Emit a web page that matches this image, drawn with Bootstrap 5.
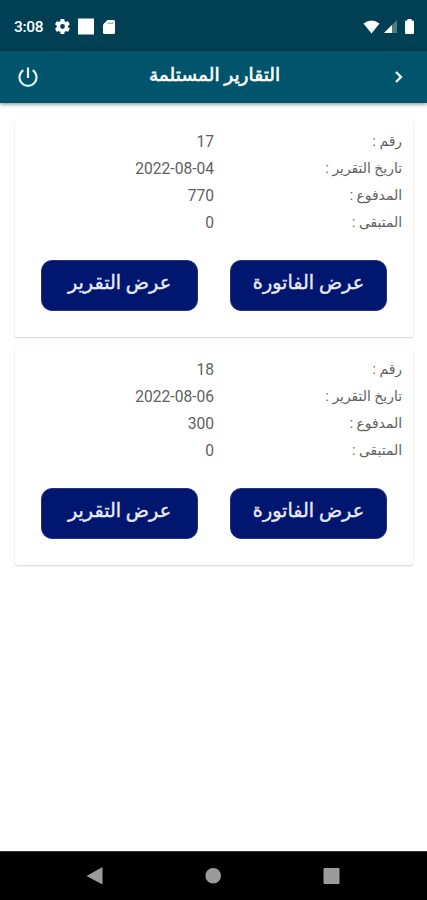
<!DOCTYPE html>
<html lang="ar" dir="rtl">
<head>
<meta charset="utf-8">
<meta name="viewport" content="width=device-width, initial-scale=1">
<title>التقارير المستلمة</title>
<link rel="stylesheet" href="https://cdn.jsdelivr.net/npm/bootstrap@5.3.0/dist/css/bootstrap.min.css">
<style>
body { font-family: Roboto, "DejaVu Sans", sans-serif; background: #fff; height: 900px; overflow: hidden; }
svg { display: block; flex: none; }
.status-bar { height: 51px; background: #003f54; padding: 2px 13px 0 14px; }
.status-time { font-size: 15.5px; font-weight: 500; line-height: 20px; width: 41px; letter-spacing: -.3px; }
.app-bar { height: 52px; background: #00546b; padding: 0 18px; box-shadow: 0 1px 4px rgba(0,0,0,.5); z-index: 1; }
.app-title { font-size: 18.6px; font-weight: 400; -webkit-text-stroke: .6px #fff; line-height: 24px; padding: 0 0 5px 2px; }
.reports { padding: 16px 14px 0 15px; gap: 10px; }
.report { height: 218px; border: 0; border-radius: 3px; box-shadow: 0 1px 2px rgba(0,0,0,.18); padding: 9px 11px 0 0; color: #606060; }
.field { height: 27px; line-height: 27px; font-size: 13.9px; }
.field-name { width: 188px; line-height: 26px; }
.field-value { font-size: 15.6px; line-height: 28px; }
.actions { padding: 24px 15px 0 26px; }
.btn-report { width: 157px; height: 51px; background: #00166f; border: 1px solid #24327f; border-radius: 11px; font-size: 19.2px; font-weight: 400; -webkit-text-stroke: .4px #e8eafa; line-height: 24px; padding: 0 0 5px; color: #e8eafa; }
.btn-report:hover { background: #00218a; color: #fff; }
.nav-keys { height: 49px; background: #000; border-top: 1px solid #333; padding: 0 87px 0 86px; }
</style>
</head>
<body class="d-flex flex-column m-0">
<div class="status-bar d-flex align-items-center justify-content-between text-white flex-shrink-0" dir="ltr">
  <div class="d-flex align-items-center">
    <span class="status-time">3:08</span>
    <svg width="15" height="15" viewBox="2 2 20 20" fill="#fff"><path d="M19.4 13c.1-.7.1-1.300 0-2l2.100-1.600c.2-.2.200-.4.100-.6l-2-3.500c-.1-.2-.4-.3-.6-.2l-2.500 1a7 7 0 0 0-1.700-1l-.4-2.700c0-.2-.2-.4-.5-.4h-4c-.2 0-.4.200-.5.400L9 5.100c-.6.300-1.200.6-1.700 1l-2.500-1c-.2-.1-.5 0-.6.200l-2 3.500c-.1.200-.1.500.1.600L4.400 11v2l-2.100 1.600c-.2.200-.2.400-.1.600l2 3.500c.1.200.4.300.6.200l2.500-1c.5.400 1.100.7 1.700 1l.4 2.700c.1.200.3.400.5.400h4c.3 0 .5-.2.500-.4l.4-2.700c.6-.3 1.200-.6 1.700-1l2.500 1c.2.100.5 0 .6-.2l2-3.500c.1-.2.100-.5-.1-.6zM12 15.200a3.200 3.200 0 1 1 0-6.400 3.200 3.200 0 0 1 0 6.400z"/></svg>
    <svg class="ms-2" width="16" height="17"><path fill="#fff" d="M0 .5h16v16H0z"/></svg>
    <svg class="ms-2" width="14" height="16"><path fill="#fff" d="M5.500 1H11.500a1.500 1.500 0 0 1 1.500 1.500v11a1.500 1.500 0 0 1-1.500 1.500h-9A1.500 1.500 0 0 1 1 13.500V5.500z"/><path d="M5.500 4.200h6" stroke="#7794a0"/></svg>
  </div>
  <div class="d-flex align-items-center">
    <svg width="17" height="14"><path fill="#fff" d="M.5 3.500Q8.500-2.500 16.500 3.500L8.500 13.500z"/></svg>
    <svg class="ms-1 me-2" width="13" height="13"><path fill="#507b88" d="M13 0v13H0z"/><path fill="#fff" d="M8 5v8H0z"/></svg>
    <svg width="9" height="15"><path fill="#fff" d="M2.500 1.500V0h4v1.500H8a1 1 0 0 1 1 1V14a1 1 0 0 1-1 1H1a1 1 0 0 1-1-1V2.500a1 1 0 0 1 1-1z"/></svg>
  </div>
</div>
<header class="app-bar d-flex align-items-center justify-content-between text-white flex-shrink-0 position-relative">
  <svg width="20" height="20" fill="none" stroke="#fff" stroke-width="2.300"><path d="M7 5l5 5-5 5"/></svg>
  <h1 class="app-title m-0">التقارير المستلمة</h1>
  <svg width="20" height="20" fill="none" stroke="#e4f0f3" stroke-width="2.200"><path d="M10 .5v10.500M5.300 3.200a8.500 8.500 0 1 0 9.400 0"/></svg>
</header>
<main class="reports d-flex flex-column flex-grow-1">
  <article class="report card">
    <div class="field d-flex"><span class="field-name">رقم :</span><span class="field-value">17</span></div>
    <div class="field d-flex"><span class="field-name">تاريخ التقرير :</span><span class="field-value" dir="ltr">2022-08-04</span></div>
    <div class="field d-flex"><span class="field-name">المدفوع :</span><span class="field-value">770</span></div>
    <div class="field d-flex"><span class="field-name">المتبقى :</span><span class="field-value">0</span></div>
    <div class="actions d-flex justify-content-between"><button class="btn btn-report">عرض الفاتورة</button><button class="btn btn-report">عرض التقرير</button></div>
  </article>
  <article class="report card">
    <div class="field d-flex"><span class="field-name">رقم :</span><span class="field-value">18</span></div>
    <div class="field d-flex"><span class="field-name">تاريخ التقرير :</span><span class="field-value" dir="ltr">2022-08-06</span></div>
    <div class="field d-flex"><span class="field-name">المدفوع :</span><span class="field-value">300</span></div>
    <div class="field d-flex"><span class="field-name">المتبقى :</span><span class="field-value">0</span></div>
    <div class="actions d-flex justify-content-between"><button class="btn btn-report">عرض الفاتورة</button><button class="btn btn-report">عرض التقرير</button></div>
  </article>
</main>
<footer class="nav-keys d-flex align-items-center justify-content-between flex-shrink-0" dir="ltr">
  <svg width="17" height="18" fill="#9b9b9b"><path d="M16.500 0v17.500L.5 9z"/></svg>
  <svg width="16" height="16" fill="#9b9b9b"><circle cx="8.200" cy="7.800" r="7.800"/></svg>
  <svg width="17" height="17" fill="#9b9b9b"><rect x=".5" y="0" width="16" height="16" rx="1"/></svg>
</footer>
<script src="https://cdn.jsdelivr.net/npm/bootstrap@5.3.0/dist/js/bootstrap.bundle.min.js"></script>
</body>
</html>
